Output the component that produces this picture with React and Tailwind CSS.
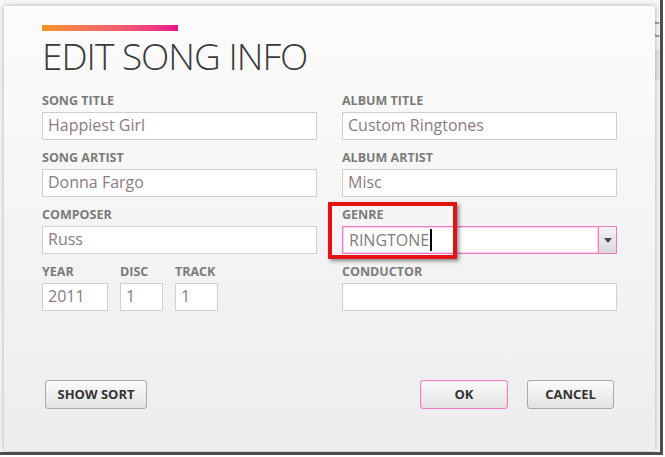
import React from 'react';

const FONT = { fontFamily: '"Open Sans", "Liberation Sans", sans-serif' };

// Small caps label above each field
function Label({ children }) {
  return (
    <div className="text-[12.5px] leading-[12px] font-bold text-[#7b7b7b] mb-[5px] whitespace-nowrap">
      {children}
    </div>
  );
}

function TextBox({ value, width = 'w-[275px]' }) {
  return (
    <div className={`${width} h-[28px] bg-white border border-[#cfcfcf] flex items-center pl-[5px] pb-[2px]`}>
      <span className="text-[16px] leading-none text-[#8a7b84] whitespace-nowrap">{value}</span>
    </div>
  );
}

function Field({ label, value }) {
  return (
    <div>
      <Label>{label}</Label>
      <TextBox value={value} />
    </div>
  );
}

function GenreBox() {
  return (
    <div className="w-[275px] h-[28px] flex border border-[#f07ac6] bg-white">
      <div className="flex-1 flex items-center pl-[5px] pb-[1px] border border-[#fcd0ea]">
        <span className="text-[16px] leading-none text-[#7e7e7e]">RINGTONE</span>
        <span className="w-[2px] h-[22px] bg-black ml-[1px]"></span>
      </div>
      <div className="w-[18px] border-l border-[#f07ac6] bg-gradient-to-b from-[#f4f4f4] to-[#d9d9d9] flex items-center justify-center">
        <svg width="8" height="5" viewBox="0 0 8 5">
          <path d="M0 0h8L4 5z" fill="#4a4a4a" />
        </svg>
      </div>
    </div>
  );
}

function Button({ children, width, active }) {
  return (
    <button
      className={`${width} h-[29px] rounded-[3px] border text-[13px] font-bold text-[#333] bg-gradient-to-b from-[#fbfbfb] to-[#e2e2e2] ${
        active ? 'border-[#f07ac6] shadow-[inset_0_0_2px_#f9c2e4]' : 'border-[#a9a9a9]'
      }`}
    >
      {children}
    </button>
  );
}

export default function App() {
  return (
    <div className="w-[665px] h-[457px] bg-white" style={FONT}>
      <div className="relative w-[663px] h-[455px] bg-[#f6f6f6] border-r-[3px] border-b-[3px] border-[#4d4d4d] overflow-hidden">
        {/* bits of the window behind the dialog */}
        <span className="absolute left-[650px] top-[12px] text-[28px] leading-none text-[#9a9a9a]">t</span>
        <div className="absolute left-[655px] top-[50px] w-[10px] h-[30px] bg-[#e7e4e6]"></div>

        {/* dialog */}
        <div className="relative ml-[4px] mt-[6px] w-[651px] h-[445px] bg-gradient-to-b from-[#fcfcfc] to-[#ededed] shadow-[0_0_5px_rgba(0,0,0,0.3)] pl-[38px] pt-[19px]">
          <div className="w-[136px] h-[6px] bg-gradient-to-r from-[#f5921e] to-[#ec0a8c]"></div>
          <h1 className="mt-[6px] text-[37px] leading-[37px] font-light text-[#3a3a3a] tracking-[-1px]">EDIT SONG INFO</h1>

          <div className="mt-[21px] grid grid-cols-[275px_275px] gap-x-[25px] gap-y-[12px]">
            <Field label="SONG TITLE" value="Happiest Girl" />
            <Field label="ALBUM TITLE" value="Custom Ringtones" />
            <Field label="SONG ARTIST" value="Donna Fargo" />
            <Field label="ALBUM ARTIST" value="Misc" />
            <Field label="COMPOSER" value="Russ" />
            <div>
              <Label>GENRE</Label>
              <GenreBox />
            </div>
            <div className="flex gap-[12px]">
              <div>
                <Label>YEAR</Label>
                <TextBox value="2011" width="w-[66px]" />
              </div>
              <div>
                <Label>DISC</Label>
                <TextBox value="1" width="w-[43px]" />
              </div>
              <div>
                <Label>TRACK</Label>
                <TextBox value="1" width="w-[43px]" />
              </div>
            </div>
            <Field label="CONDUCTOR" value="" />
          </div>

          <div className="mt-[69px] flex items-center pl-[3px] pr-[41px]">
            <Button width="w-[102px]">SHOW SORT</Button>
            <div className="flex-1"></div>
            <Button width="w-[88px]" active>OK</Button>
            <div className="w-[19px]"></div>
            <Button width="w-[87px]">CANCEL</Button>
          </div>
        </div>

        {/* red annotation frame */}
        <div className="absolute left-[328px] top-[202px] w-[129px] h-[57px] border-[4px] border-[#e31313] shadow-[2px_2px_4px_rgba(0,0,0,0.45)]"></div>
      </div>
    </div>
  );
}
